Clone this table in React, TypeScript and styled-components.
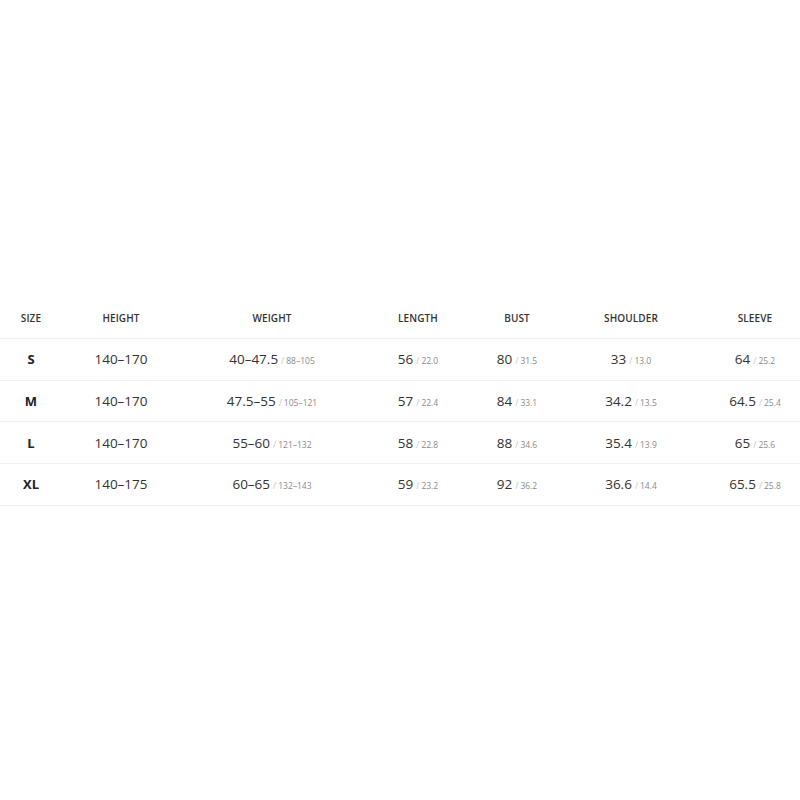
import React from 'react'
import styled, { createGlobalStyle } from 'styled-components'

const GlobalStyle = createGlobalStyle`
  html, body {
    margin: 0;
    padding: 0;
    background: #ffffff;
    overflow: hidden;
  }
  body {
    font-family: "Open Sans", "Noto Sans", "Liberation Sans", sans-serif;
    color: #333333;
  }
`

const Page = styled.div`
  width: 800px;
  height: 800px;
  display: flex;
  flex-direction: column;
  padding-top: 298px;
  box-sizing: border-box;
`

const Table = styled.div`
  width: 810px;
`

const Row = styled.div<{ $head?: boolean }>`
  display: grid;
  grid-template-columns: 62px 118px 184px 108px 90px 138px 110px;
  box-sizing: border-box;
  height: ${(p) => (p.$head ? '41px' : '41.7px')};
  align-items: center;
  border-bottom: 1px solid #f1f1f1;
`

const HeadCell = styled.div`
  text-align: center;
  font-size: 10px;
  font-weight: 600;
  color: #333333;
  letter-spacing: 0.1px;
`

const SizeCell = styled.div`
  text-align: center;
  font-size: 13px;
  font-weight: 700;
  color: #222222;
`

const Cell = styled.div`
  text-align: center;
  font-size: 13.5px;
  color: #333333;
  white-space: nowrap;
`

const Sub = styled.span`
  font-size: 8.5px;
  color: #8a8a8a;
`

const Slash = styled.span`
  color: #c4c4c4;
  margin: 0 2px 0 3px;
`

const heads = ['SIZE', 'HEIGHT', 'WEIGHT', 'LENGTH', 'BUST', 'SHOULDER', 'SLEEVE']

type Pair = [string, string]

const rows: { size: string; height: string; vals: Pair[] }[] = [
  {
    size: 'S',
    height: '140–170',
    vals: [['40–47.5', '88–105'], ['56', '22.0'], ['80', '31.5'], ['33', '13.0'], ['64', '25.2']],
  },
  {
    size: 'M',
    height: '140–170',
    vals: [['47.5–55', '105–121'], ['57', '22.4'], ['84', '33.1'], ['34.2', '13.5'], ['64.5', '25.4']],
  },
  {
    size: 'L',
    height: '140–170',
    vals: [['55–60', '121–132'], ['58', '22.8'], ['88', '34.6'], ['35.4', '13.9'], ['65', '25.6']],
  },
  {
    size: 'XL',
    height: '140–175',
    vals: [['60–65', '132–143'], ['59', '23.2'], ['92', '36.2'], ['36.6', '14.4'], ['65.5', '25.8']],
  },
]

const App = () => (
  <Page>
    <GlobalStyle />
    <Table>
      <Row $head>
        {heads.map((h) => (
          <HeadCell key={h}>{h}</HeadCell>
        ))}
      </Row>
      {rows.map((r) => (
        <Row key={r.size}>
          <SizeCell>{r.size}</SizeCell>
          <Cell>{r.height}</Cell>
          {r.vals.map(([main, sub], i) => (
            <Cell key={i}>
              {main}
              <Sub>
                <Slash>/</Slash>
                {sub}
              </Sub>
            </Cell>
          ))}
        </Row>
      ))}
    </Table>
  </Page>
)

export default App
